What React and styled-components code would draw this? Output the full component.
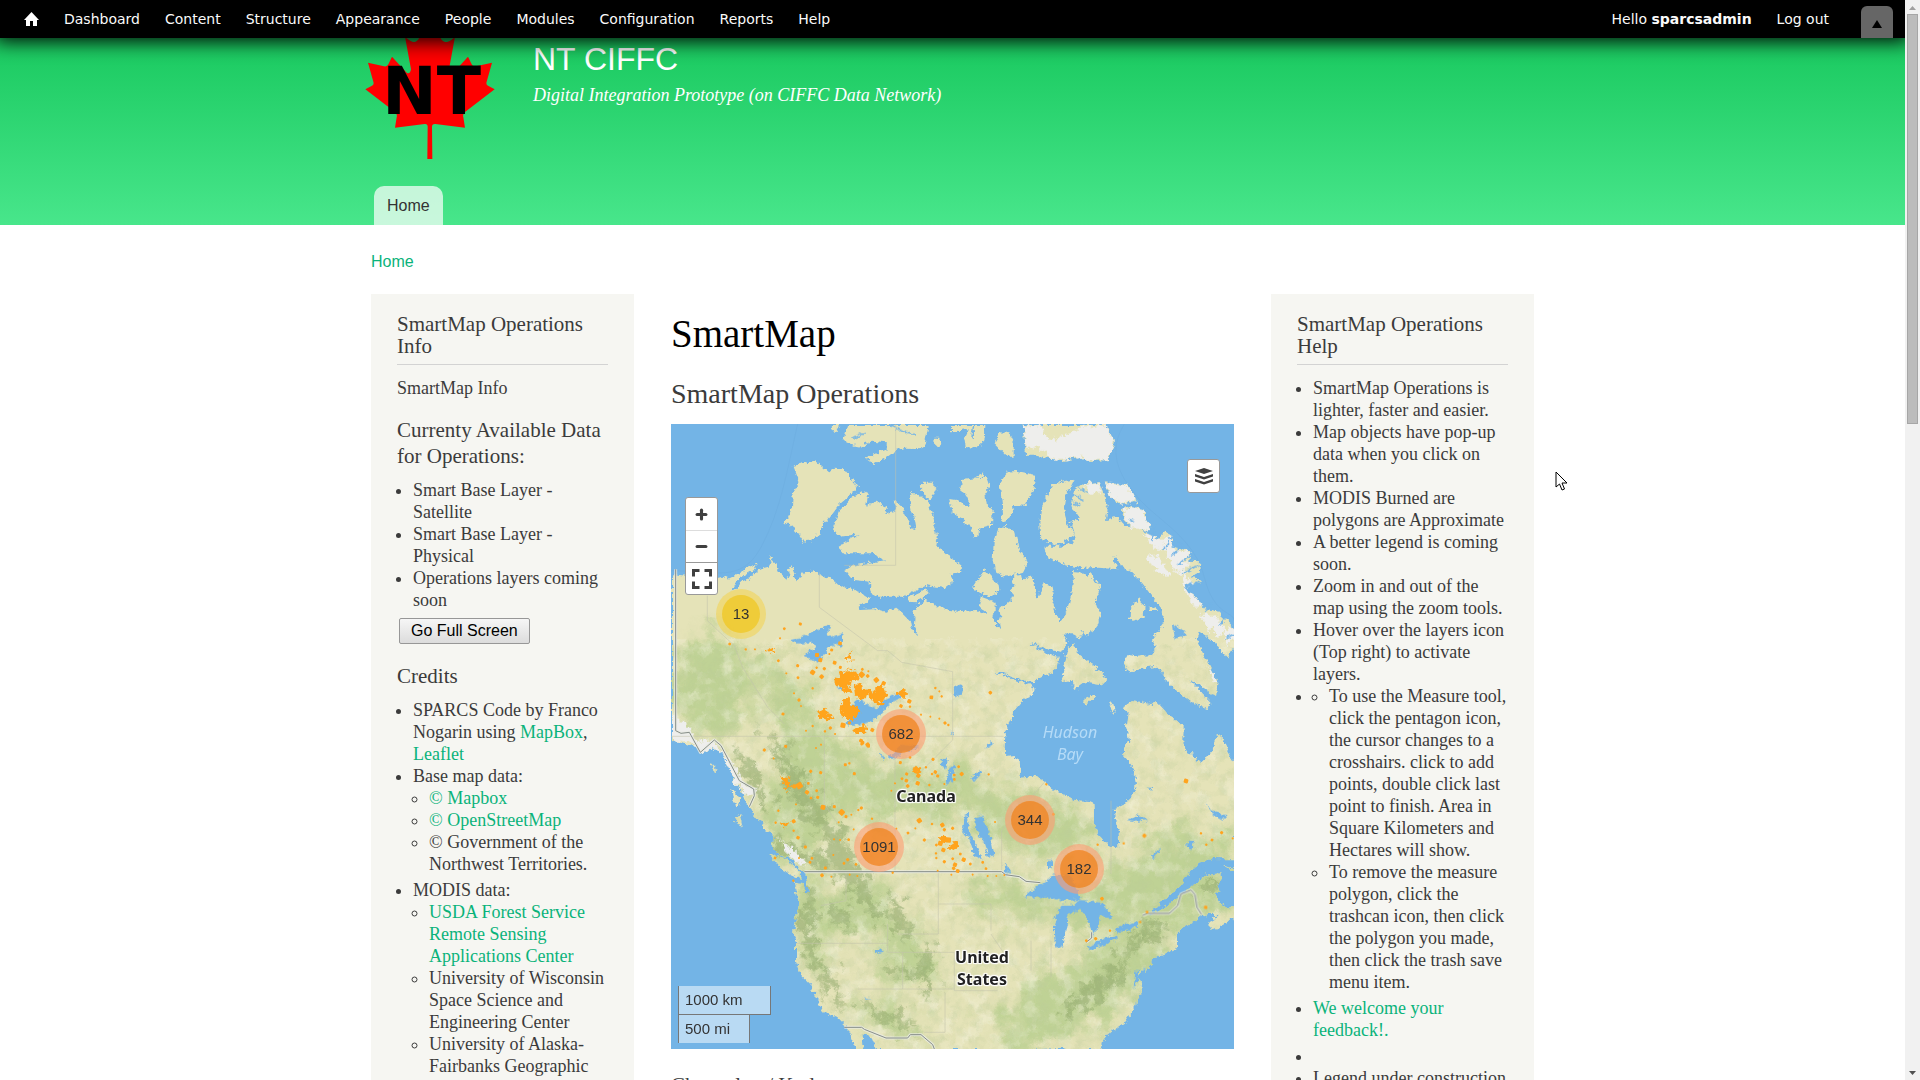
import React from "react";
import styled, { createGlobalStyle } from "styled-components";
import { FiPlus, FiMinus } from "react-icons/fi";

const COLORS = {
  text: "#3b3b3b",
  link: "#0ab37a",
  sidebar: "#f6f6f2",
  line: "#d3d3d3",
  water: "#73b4e6",
  land: "#e5e3b8",
};

const SERIF = `Georgia, "Liberation Serif", serif`;
const SANS = `"Liberation Sans", Arial, sans-serif`;

const GlobalStyle = createGlobalStyle`
  * {
    box-sizing: border-box;
  }
  body {
    margin: 0;
    overflow: hidden;
    background: #fff;
    color: ${COLORS.text};
    font-family: ${SERIF};
    font-size: 18px;
    line-height: 22px;
  }
  h1, h2, h3, p, ul {
    margin: 0;
    padding: 0;
    font-weight: normal;
  }
  a {
    color: ${COLORS.link};
    text-decoration: none;
  }
`;

const Window = styled.div`
  display: grid;
  grid-template-columns: 1fr 15px;
  height: 100vh;
  overflow: hidden;
`;

const Page = styled.div`
  min-width: 0;
  overflow: hidden;
`;

const ScrollBar = styled.div`
  display: flex;
  flex-direction: column;
  align-items: center;
  background: #f1f1f1;
  svg {
    flex: none;
    width: 15px;
    height: 14px;
  }
  .thumb {
    flex: 0 0 38%;
    width: 11px;
    background: #bcbcbc;
    border: 1px solid #a6a6a6;
  }
  .space {
    flex: 1;
  }
`;

const Toolbar = styled.nav`
  position: relative;
  z-index: 2;
  display: flex;
  align-items: center;
  height: 38px;
  padding: 0 12px 0 24px;
  background: #000;
  box-shadow: 0 -2px 20px 5px #000;
  font-family: "DejaVu Sans", Verdana, sans-serif;
  font-size: 14px;
  a {
    color: #fafafa;
  }
`;

const ToolbarMenu = styled.div`
  display: flex;
  align-items: center;
  gap: 25px;
  svg {
    display: block;
    width: 15px;
    height: 15px;
  }
`;

const UserMenu = styled(ToolbarMenu)`
  margin-left: auto;
`;

const ToggleButton = styled.button`
  align-self: flex-end;
  width: 32px;
  height: 32px;
  margin-left: 32px;
  padding: 4px 0 0;
  border: 0;
  border-radius: 6px 6px 0 0;
  background: #666;
  svg {
    display: block;
    margin: auto;
  }
`;

const Header = styled.header`
  background: linear-gradient(#19c95f, #48e68b);
`;

const HeaderInner = styled.div`
  width: 1175px;
  max-width: 100%;
  margin: 0 auto;
`;

const Branding = styled.div`
  display: flex;
  gap: 38px;
  color: #fff;
  svg {
    width: 130px;
    height: 122px;
  }
  .names {
    display: flex;
    flex-direction: column;
    gap: 9px;
    padding-top: 5px;
  }
  .site-name {
    color: #fff;
    font-family: ${SANS};
    font-size: 32px;
    line-height: 32px;
  }
  .slogan {
    font-style: italic;
  }
`;

const Tabs = styled.nav`
  display: flex;
  padding: 26px 9px 0;
  a {
    padding: 0 13px;
    border-radius: 10px 10px 0 0;
    background: rgba(255, 255, 255, 0.7);
    color: #333;
    font-family: ${SANS};
    font-size: 16px;
    line-height: 39px;
  }
`;

const Container = styled.div`
  width: 1163px;
  max-width: 100%;
  margin: 0 auto;
`;

const Breadcrumb = styled.div`
  padding: 26px 0 21px;
  font-family: ${SANS};
  font-size: 16px;
`;

const Columns = styled.div`
  display: grid;
  grid-template-columns: 263px 1fr 263px;
  gap: 37px;
`;

const Sidebar = styled.aside`
  padding: 19px 26px;
  background: ${COLORS.sidebar};
`;

const BlockTitle = styled.h2`
  margin-bottom: 12px;
  padding-bottom: 7px;
  border-bottom: 1px solid ${COLORS.line};
  font-size: 21px;
  line-height: 22px;
`;

const SubTitle = styled.h3`
  padding: 18px 0 10px;
  font-size: 21px;
  line-height: 26px;
`;

const List = styled.ul`
  ul {
    padding-bottom: 4px;
  }
  li {
    margin-left: 16px;
  }
  .spaced {
    padding-bottom: 4px;
  }
`;

const FullScreenButton = styled.button`
  display: block;
  height: 26px;
  margin: 7px 2px 1px;
  padding: 0 11px;
  border: 1px solid #979797;
  border-radius: 2px;
  background: linear-gradient(#f6f6f6, #dcdcdc);
  color: #000;
  font-family: ${SANS};
  font-size: 16px;
`;

const Main = styled.main`
  min-width: 0;
  padding-top: 18px;
  h1 {
    color: #000;
    font-size: 39px;
    line-height: 44px;
  }
  h2 {
    padding: 22px 0 14px;
    font-size: 28px;
    line-height: 32px;
  }
  h3 {
    padding-top: 23px;
    font-size: 21px;
    line-height: 26px;
  }
`;

const MapBox = styled.div`
  position: relative;
  height: 625px;
  overflow: hidden;
  background: ${COLORS.water};
  font-family: ${SANS};
  > svg {
    display: block;
    width: 100%;
    height: 100%;
  }
`;

const MapControls = styled.div`
  position: absolute;
  top: ${(props) => props.top}px;
  left: ${(props) => props.left || "auto"};
  right: ${(props) => props.right || "auto"};
  border: 1px solid #999;
  border-radius: 3px;
  background: #fff;
  button {
    display: flex;
    align-items: center;
    justify-content: center;
    width: 31px;
    height: 32px;
    padding: 0;
    border: 0;
    border-top: 1px solid #ddd;
    background: none;
    color: #404040;
  }
  button:first-child {
    border-top: 0;
  }
  button:last-child {
    border-color: ${(props) => (props.left ? "#999" : "transparent")};
  }
`;

const Cluster = styled.div`
  position: absolute;
  display: flex;
  align-items: center;
  justify-content: center;
  width: 50px;
  height: 50px;
  border-radius: 50%;
  transform: translate(-50%, -50%);
  background: ${(props) =>
    props.small ? "rgba(241, 211, 87, 0.6)" : "rgba(253, 156, 115, 0.6)"};
  color: #333;
  font-size: 15px;
  span {
    width: 38px;
    border-radius: 50%;
    background: ${(props) =>
      props.small ? "rgba(240, 194, 12, 0.6)" : "rgba(241, 128, 23, 0.7)"};
    line-height: 38px;
    text-align: center;
  }
`;

const PlaceLabel = styled.div`
  position: absolute;
  transform: translate(-50%, -50%);
  color: ${(props) => (props.sea ? "#b5dbf7" : "#222")};
  font-family: "Noto Sans", sans-serif;
  font-size: 16px;
  font-style: ${(props) => (props.sea ? "italic" : "normal")};
  font-weight: ${(props) => (props.sea ? 400 : 700)};
  text-align: center;
  text-shadow: ${(props) =>
    props.sea
      ? "none"
      : "0 0 2px #fff, 1px 1px 1px #fff, -1px -1px 1px #fff, 1px -1px 1px #fff, -1px 1px 1px #fff"};
`;

const MapScale = styled.div`
  position: absolute;
  bottom: 6px;
  left: 7px;
  color: #333;
  font-size: 15px;
  div {
    width: 93px;
    padding-left: 6px;
    border: 1px solid #777;
    border-width: 0 1px 1px;
    background: rgba(255, 255, 255, 0.5);
    line-height: 28px;
  }
  div + div {
    width: 72px;
    border-bottom: 0;
  }
`;

const Pointer = styled.svg`
  position: fixed;
  top: 471px;
  left: 1555px;
  width: 13px;
  height: 21px;
`;

const menuItems = [
  "Dashboard",
  "Content",
  "Structure",
  "Appearance",
  "People",
  "Modules",
  "Configuration",
  "Reports",
  "Help",
];

const clusters = [
  { count: 13, x: 70, y: 190 },
  { count: 682, x: 230, y: 310 },
  { count: 1091, x: 208, y: 423 },
  { count: 344, x: 359, y: 396 },
  { count: 182, x: 408, y: 445 },
];

const mainland =
  "M0 448L40 452 140 458 160 452 165 462 200 445 232 425 258 415 250 430 215 450 190 470 178 496 192 492 205 470 230 460 262 432 290 425 298 410 290 393 305 405 320 440 345 463 352 450 348 435 358 420 366 440 362 455 372 466 385 460 395 442 425 436 445 450 480 462 520 488 550 492 590 518 588 528 560 545 562 552 605 550 640 560 670 548 690 565 715 590 720 615 735 635 725 600 728 575 718 560 760 525 785 540 830 555 870 558 912 555 927 562 957 570 975 600 985 614 980 590 988 570 985 552 1020 520 1025 505 1012 495 1028 480 1020 462 1035 445 1055 460 1080 455 1088 490 1098 525 1108 490 1118 475 1135 480 1145 505 1140 530 1155 570 1165 592 1180 570 1192 530 1198 505 1203 470 1200 438 1225 440 1245 452 1260 448 1262 468 1285 475 1280 500 1272 520 1265 530 1285 560 1280 590 1262 615 1240 630 1225 610 1235 635 1222 640 1200 627 1172 625 1180 640 1190 650 1170 680 1130 675 1090 658 1075 657 1100 668 1120 685 1160 692 1155 720 1145 745 1110 752 1085 772 1060 768 1015 752 985 742 970 745 1000 752 1040 768 1075 780 1085 795 1078 810 1055 820 1030 850 1012 890 1000 930 998 970 1000 993 1010 992 1025 990 1040 1010 1050 1058 1085 1052 1115 1065 1140 1088 1175 1108 1205 1125 1250 1128 1265 1135 1266 1200 1275 1215 1285 1235 1308 1260 1320 1272 1332 1262 1342 1265 1340 1230 1330 1185 1325 1150 1355 1135 1385 1105 1392 1080 1387 1050 1378 1020 1350 990 1365 960 1372 948 1362 900 1367 860 1355 840 1377 825 1437 838 1452 828 1477 855 1492 875 1535 900 1534 950 1537 978 1552 985 1567 985 1572 1013 1597 1008 1622 973 1627 955 1640 925 1652 945 1670 985 1689 1015 1689 1303 1620 1302 1580 1310 1550 1350 1520 1385 1480 1420 1440 1460 1445 1465 1500 1430 1560 1380 1600 1350 1645 1345 1648 1365 1632 1380 1642 1400 1630 1410 1645 1435 1670 1448 1689 1440 1689 1475 1660 1480 1640 1510 1620 1510 1612 1492 1640 1475 1620 1462 1590 1475 1560 1490 1530 1505 1515 1530 1515 1565 1505 1570 1520 1568 1440 1600 1437 1620 1400 1655 1412 1690 1395 1720 1392 1745 1360 1790 1310 1825 1290 1850 1285 1875 1200 1875 1175 1868 1100 1872 1090 1875 615 1875 600 1838 572 1830 575 1875 552 1875 535 1830 520 1800 495 1775 455 1760 440 1730 415 1680 390 1655 372 1610 372 1555 366 1530 375 1450 380 1430 365 1370 395 1375 400 1405 411 1405 405 1370 400 1343 370 1320 360 1300 320 1290 300 1260 305 1230 275 1215 270 1190 248 1180 230 1140 210 1100 190 1075 170 1030 150 985 120 965 90 990 80 975 50 960 0 945Z";

const islands = [
  "M362 122L430 106 470 140 485 128 515 130 558 185 500 235 470 275 450 300 445 328 398 354 375 318 340 292 360 245 362 205 380 170Z",
  "M500 260L540 215 580 197 588 210 582 245 605 228 645 245 640 265 675 255 665 225 690 245 705 275 715 310 730 312 720 250 713 205 730 205 768 225 780 270 795 330 790 360 830 395 868 420 865 440 835 450 845 470 820 490 760 480 720 500 690 515 620 515 600 505 592 470 545 465 520 435 540 422 640 405 600 385 515 385 497 365 560 328 500 335 480 310Z",
  "M525 0L770 0 755 70 700 68 665 80 640 100 605 117 582 98 640 75 645 55 600 50 560 68 512 45Z",
  "M480 0L502 0 490 22 477 12Z",
  "M740 185L755 170 785 170 790 190 775 225 765 215Z",
  "M790 38L805 38 808 55 797 66 786 55Z",
  "M705 520L765 492 770 505 735 532 710 530Z",
  "M837 0L937 0 936 30 933 50 915 68 878 66 875 45 890 12 837 22Z",
  "M965 55L985 22 1012 25 1025 50 1025 95 1005 95 985 75Z",
  "M1055 0L1300 0 1325 40 1325 60 1310 105 1260 108 1225 98 1170 108 1095 92 1062 92Z",
  "M832 222L850 225 880 245 893 240 880 205 865 195 870 165 920 158 945 160 952 180 940 205 945 245 962 255 960 300 925 310 922 335 908 338 893 305 870 280 840 265Z",
  "M902 158L937 142 932 155Z",
  "M983 170L1005 140 1032 138 1090 150 1085 190 1058 242 1020 240 1023 260 1000 290 989 290 990 240Z",
  "M965 350L975 310 1000 302 1030 325 1040 370 1065 410 1050 440 1000 455 970 440 962 405Z",
  "M1107 250L1145 175 1205 164 1180 215 1175 250 1190 300 1207 330 1180 350 1155 362 1105 340 1102 295Z",
  "M912 472L935 433 980 480 982 495 960 516 930 505 900 490Z",
  "M927 515L968 530 968 560 960 590 940 560 920 545Z",
  "M1190 665L1205 658 1215 685 1245 705 1275 730 1303 765 1290 778 1240 770 1210 792 1195 765 1165 772Z",
  "M1375 545L1400 525 1418 540 1415 575 1390 588 1373 575Z",
  "M1235 820L1268 805 1272 815 1245 840 1233 835Z",
  "M1310 840L1320 832 1328 855 1318 866Z",
  "M1430 545L1450 545 1455 555 1430 555Z",
  "M1207 195L1237 175 1282 172 1297 215 1307 250 1302 285 1337 275 1357 300 1397 310 1437 330 1477 350 1497 395 1527 440 1537 490 1577 520 1597 550 1637 560 1689 610 1689 660 1667 700 1642 670 1627 650 1582 620 1572 640 1597 690 1617 730 1637 770 1632 815 1597 790 1552 765 1612 830 1607 853 1557 830 1517 800 1487 770 1457 725 1417 730 1397 735 1367 740 1354 715 1367 690 1397 695 1437 690 1452 670 1437 645 1477 590 1467 550 1437 510 1407 470 1377 440 1347 420 1337 395 1322 395 1337 430 1277 425 1227 430 1187 420 1127 400 1117 365 1167 365 1212 350 1195 290 1222 280 1195 240Z",
  "M1297 168L1345 178 1370 182 1395 235 1340 235 1315 215Z",
  "M1350 255L1375 243 1418 255 1420 280 1437 300 1425 318 1380 310 1355 285Z",
  "M1445 355L1480 320 1502 335 1498 365 1555 378 1552 410 1585 412 1580 440 1560 455 1592 465 1590 475 1545 480 1530 500 1490 450 1450 400Z",
  "M287 1284L340 1298 380 1335 387 1362 330 1335Z",
  "M183 1175L212 1168 205 1190 210 1215 195 1195Z",
  "M178 1090L205 1125 200 1144 185 1130Z",
  "M115 1010L135 1030 125 1040Z",
  "M1612 1498L1655 1455 1689 1465 1689 1478 1640 1505 1615 1515Z",
  "M1650 1318L1689 1330 1689 1340Z",
  "M205 1090L235 1085 248 1110 238 1145 222 1130Z",
];

const snow = [
  "M1055 0L1112 0 1120 35 1145 42 1195 25 1225 5 1300 0 1325 40 1325 60 1310 105 1260 108 1225 98 1170 108 1135 105 1110 72 1060 62Z",
  "M1297 168L1345 178 1370 182 1395 235 1340 232 1315 215Z",
  "M1350 255L1375 243 1418 255 1420 280 1437 300 1425 315 1380 310 1355 285Z",
  "M1425 390L1455 395 1485 430 1490 452 1465 448 1430 415Z",
  "M1500 375L1555 380 1535 410 1560 412 1525 450 1505 430 1490 400Z",
  "M1525 435L1560 470 1585 510 1600 540 1570 545 1540 500Z",
  "M1582 565L1625 570 1660 610 1640 635 1600 600Z",
  "M1470 345L1500 325 1500 350 1520 350 1500 395 1480 395Z",
  "M1420 325L1460 335 1480 370 1460 375 1430 350Z",
  "M1612 725L1625 740 1635 775 1622 770Z",
  "M1655 620L1689 600 1689 640 1665 660Z",
  "M1230 175L1282 172 1290 200 1255 205Z",
  "M0 870L30 890 60 920 75 950 120 945 160 990 190 1030 215 1075 250 1090 252 1110 215 1105 180 1060 150 1020 90 1000 55 950 0 945Z",
  "M320 1240L360 1270 400 1310 395 1325 350 1290Z",
];

const lakes = [
  "M353 645L400 632 430 615 470 598 483 606 460 625 480 635 512 623 508 665 480 660 465 680 440 710 425 705 392 695 408 678 432 672 425 650 395 655 360 655Z",
  "M520 890L545 870 540 840 560 822 590 840 615 850 640 820 672 805 690 812 660 830 620 870 600 890 560 900 530 898Z",
  "M495 780L520 795 510 798Z",
  "M845 795L860 778 872 785 868 805 850 815Z",
  "M835 915L845 925 842 932Z",
  "M808 1005L825 1000 820 1030 810 1025Z",
  "M850 1015L840 1068 822 1080 832 1030Z",
  "M900 1055L925 1035 930 1045 908 1068Z",
  "M940 970L955 948 960 960Z",
  "M875 1175L888 1165 890 1210 900 1240 925 1290 932 1305 905 1290 885 1230 870 1210Z",
  "M905 1180L930 1170 945 1205 957 1235 967 1290 950 1295 935 1250 912 1210Z",
  "M995 1345L1000 1315 1015 1340 1000 1350Z",
  "M1125 1305L1140 1305 1140 1325 1125 1328Z",
  "M1058 1415L1100 1380 1150 1348 1190 1350 1215 1390 1225 1425 1170 1428 1145 1420 1115 1415 1090 1418Z",
  "M1145 1500L1165 1440 1205 1440 1215 1428 1290 1432 1315 1462 1320 1480 1280 1475 1275 1515 1262 1528 1250 1500 1240 1470 1225 1455 1190 1465 1180 1520 1175 1560 1155 1568 1147 1545Z",
  "M1248 1565L1290 1540 1330 1532 1335 1542 1270 1570 1250 1572Z",
  "M1325 1510L1350 1500 1395 1490 1395 1502 1370 1515 1335 1522Z",
  "M1440 1460L1500 1410 1530 1380 1560 1330 1580 1315 1600 1340 1540 1400 1500 1430 1435 1468Z",
  "M1367 1185L1390 1175 1395 1165 1425 1185 1395 1190Z",
  "M1440 1290L1465 1265 1455 1285 1442 1305Z",
  "M1545 1250L1565 1252 1562 1275 1550 1275Z",
  "M1600 1130L1615 1155 1640 1165 1665 1170 1650 1185 1615 1165Z",
  "M1425 1085L1440 1085 1440 1100Z",
  "M610 1575L628 1572 632 1590 622 1592Z",
  "M622 990L635 990 635 1005Z",
  "M650 995L690 955 740 965 700 980 665 1000Z",
  "M1500 598L1530 610 1545 630 1505 642Z",
  "M1390 1640L1402 1630 1398 1670 1385 1690Z",
  "M1408 1635L1418 1632 1412 1660Z",
  "M575 1717L595 1722 580 1724Z",
];

const forests = [
  [120, 780, 130, 160, 0],
  [370, 880, 70, 200, -25],
  [480, 1060, 190, 100, 15],
  [760, 1100, 180, 80, 0],
  [1080, 1200, 190, 90, 20],
  [1480, 1330, 230, 100, -20],
  [1330, 1420, 190, 80, -10],
  [1560, 1430, 140, 90, -30],
  [380, 1180, 110, 130, -30],
  [420, 1470, 50, 150, 0],
  [560, 1470, 110, 90, 20],
  [1010, 1420, 130, 60, 10],
  [1130, 1760, 170, 110, -20],
  [1330, 1640, 180, 110, -40],
  [700, 1600, 70, 110, 0],
  [660, 1790, 120, 40, 20],
];

const highlands = [
  [450, 1190, 26, 230, -35],
  [550, 1380, 26, 140, -35],
  [410, 1500, 18, 120, 0],
  [465, 1660, 18, 110, -28],
  [390, 1290, 100, 20, 25],
  [240, 1060, 20, 100, -30],
  [350, 1020, 16, 130, -30],
  [500, 1470, 40, 30, 20],
  [680, 1480, 20, 80, -20],
  [765, 1640, 18, 90, 0],
  [1270, 1690, 26, 130, 50],
  [1410, 1540, 20, 90, 50],
  [700, 1640, 60, 16, 5],
  [660, 1780, 80, 14, 25],
  [1620, 1380, 50, 14, -20],
];

const borders = [
  "M14 436V920L30 928 55 925 88 985 130 948 150 965 205 1070 248 1095 250 1115 235 1148",
  "M400 1343H992L1003 1352 1045 1358 1065 1372 1108 1376",
  "M1415 1474L1430 1468H1495L1520 1445 1530 1410 1560 1398 1572 1412 1578 1450 1592 1472",
  "M520 1810H572L580 1816 645 1842H710L718 1832H750L785 1862 790 1875",
  "M1245 1555L1262 1542 1262 1525",
];

const fireBlobs = [
  "M493 775L510 750 530 738 550 742 560 760 545 770 530 780 540 800 525 805 505 790Z",
  "M550 782L570 780 575 798 595 795 598 808 570 825 555 815Z",
  "M595 815L615 798 630 785 650 812 635 835 610 835Z",
  "M508 850L530 818 538 845 560 850 565 865 545 888 515 878Z",
  "M443 865L460 855 470 870 485 878 475 888 450 878Z",
  "M680 810L700 798 708 815 695 825Z",
  "M550 920L580 900 588 920 570 928Z",
  "M522 705L540 688 542 708Z",
  "M333 1065L345 1060 362 1085 350 1095Z",
  "M328 1195L355 1195 342 1210Z",
  "M838 1265L858 1255 858 1275 830 1275Z",
  "M805 1240L820 1238 828 1255 812 1252Z",
  "M732 1035L746 1035 742 1050Z",
  "M292 672L310 678 305 686Z",
];

// x, y, size
const fireDots = [
  [176, 660, 8], [224, 676, 7], [252, 676, 6], [322, 710, 8], [340, 614, 8],
  [388, 600, 9], [327, 643, 6], [380, 725, 9], [346, 748, 6], [381, 761, 8],
  [425, 745, 14], [438, 693, 12], [448, 708, 12], [482, 678, 9], [507, 658, 11],
  [491, 716, 11], [460, 734, 9], [452, 758, 12], [437, 731, 7], [475, 690, 6],
  [508, 730, 9], [574, 736, 8], [592, 742, 6], [572, 752, 16], [590, 756, 10],
  [616, 768, 14], [638, 778, 12], [560, 764, 10], [425, 793, 7], [369, 808, 6],
  [384, 828, 9], [390, 846, 6], [336, 870, 9], [715, 832, 12], [690, 846, 10],
  [717, 848, 7], [793, 792, 7], [781, 820, 11], [812, 817, 7], [805, 802, 6],
  [516, 904, 15], [535, 897, 9], [478, 912, 9], [462, 922, 7], [492, 930, 6],
  [425, 906, 7], [405, 920, 6], [604, 918, 11], [570, 950, 11], [590, 962, 12],
  [572, 960, 8], [778, 878, 6], [822, 897, 9], [832, 903, 7], [750, 872, 6],
  [805, 884, 6], [450, 962, 6], [435, 972, 6], [344, 967, 9], [280, 978, 9],
  [308, 1003, 6], [419, 1042, 9], [449, 1046, 9], [523, 1022, 9], [535, 1018, 7],
  [550, 1049, 9], [412, 1078, 8], [385, 1085, 18], [370, 1087, 12], [408, 1105, 12],
  [437, 1100, 8], [440, 1120, 9], [420, 1122, 8], [375, 1141, 6], [456, 1150, 14],
  [490, 1148, 9], [512, 1165, 16], [525, 1178, 9], [503, 1195, 6], [541, 1172, 6],
  [571, 1152, 9], [562, 1158, 7], [603, 1184, 7], [548, 1216, 6], [322, 1160, 7],
  [314, 1196, 7], [368, 1192, 11], [368, 1220, 7], [381, 1241, 10], [403, 1269, 9],
  [384, 1302, 6], [423, 1303, 8], [417, 1315, 8], [312, 1302, 8], [489, 1246, 6],
  [507, 1248, 6], [533, 1247, 8], [487, 1293, 6], [530, 1307, 9], [519, 1318, 8],
  [555, 1321, 8], [463, 1332, 9], [453, 1354, 10], [481, 1358, 6], [536, 1352, 6],
  [559, 1356, 6], [665, 1346, 7], [367, 1370, 7], [676, 1214, 6], [711, 1227, 8],
  [733, 1213, 6], [745, 1190, 14], [760, 1248, 9], [783, 1200, 7], [814, 1203, 12],
  [820, 1217, 9], [845, 1213, 9], [808, 1258, 14], [832, 1248, 16], [848, 1268, 16],
  [796, 1263, 8], [817, 1278, 12], [795, 1288, 7], [796, 1302, 7], [820, 1313, 9],
  [845, 1304, 8], [852, 1322, 12], [848, 1333, 10], [800, 1340, 6], [860, 1341, 11],
  [841, 1352, 6], [868, 1290, 8], [878, 1307, 12], [898, 1320, 8], [905, 1352, 6],
  [945, 1334, 8], [935, 1315, 8], [976, 1356, 6], [950, 1356, 6], [1000, 1353, 6],
  [688, 1016, 9], [717, 1000, 8], [735, 1036, 16], [707, 1050, 9], [693, 1064, 8],
  [706, 1070, 10], [742, 1055, 12], [740, 1078, 12], [710, 1086, 10], [672, 1078, 6],
  [661, 1100, 6], [786, 1006, 9], [793, 1044, 10], [800, 1056, 9], [783, 1050, 7],
  [775, 1083, 7], [765, 1030, 7], [820, 1080, 6], [850, 1053, 8], [872, 1050, 11],
  [863, 1028, 8], [850, 1066, 8], [953, 1051, 7], [816, 1130, 7], [790, 1122, 8],
  [958, 806, 10], [1126, 1081, 7], [972, 1194, 6], [1147, 1171, 8], [1280, 1262, 7],
  [1358, 1258, 7], [1420, 1235, 11], [1545, 1071, 13], [1590, 1228, 7], [1606, 1262, 7],
  [1623, 1248, 8], [1652, 1226, 9], [1685, 1243, 6], [1604, 1450, 10], [1428, 1464, 8],
  [1407, 1494, 7], [1293, 1424, 10], [1317, 1520, 7], [1274, 1544, 9], [1246, 1550, 8],
  [575, 956, 10], [592, 966, 10],
];

function MapDrawing() {
  return (
    <svg viewBox="0 0 1689 1875" preserveAspectRatio="xMidYMid slice">
      <defs>
        <clipPath id="land">
          <path d={mainland} />
          {islands.map((d) => (
            <path key={d} d={d} />
          ))}
        </clipPath>
        <filter id="coast" x="0" y="0" width="100%" height="100%">
          <feTurbulence baseFrequency="0.045" numOctaves="3" seed="4" />
          <feDisplacementMap
            in="SourceGraphic"
            scale="17"
            xChannelSelector="R"
            yChannelSelector="G"
          />
        </filter>
        <filter id="soft" x="-10%" y="-10%" width="120%" height="120%">
          <feGaussianBlur stdDeviation="24" result="b" />
          <feTurbulence
            type="fractalNoise"
            baseFrequency="0.012"
            numOctaves="5"
            seed="5"
          />
          <feDisplacementMap
            in="b"
            scale="190"
            xChannelSelector="R"
            yChannelSelector="G"
          />
        </filter>
        <filter id="ridge" x="-5%" y="-5%" width="110%" height="110%">
          <feGaussianBlur stdDeviation="8" result="b" />
          <feTurbulence
            type="fractalNoise"
            baseFrequency="0.03"
            numOctaves="5"
            seed="8"
          />
          <feDisplacementMap
            in="b"
            scale="110"
            xChannelSelector="R"
            yChannelSelector="G"
          />
        </filter>
        <filter id="patchy" x="-5%" y="-5%" width="110%" height="110%">
          <feTurbulence
            type="fractalNoise"
            baseFrequency="0.08"
            numOctaves="3"
            seed="3"
          />
          <feDisplacementMap
            in="SourceGraphic"
            scale="26"
            xChannelSelector="R"
            yChannelSelector="G"
          />
        </filter>
        <filter id="relief" x="0" y="0" width="100%" height="100%">
          <feTurbulence
            type="fractalNoise"
            baseFrequency="0.03"
            numOctaves="6"
            seed="2"
          />
          <feColorMatrix values="0 0 0 0 .5  0 0 0 0 .6  0 0 0 0 .32  2.4 0 0 0 -1.05" />
        </filter>
        <filter id="light" x="0" y="0" width="100%" height="100%">
          <feTurbulence
            type="fractalNoise"
            baseFrequency="0.02"
            numOctaves="6"
            seed="12"
          />
          <feColorMatrix values="0 0 0 0 .93  0 0 0 0 .91  0 0 0 0 .77  0 3 0 0 -1.4" />
        </filter>
      </defs>
      <rect width="1689" height="1875" fill={COLORS.water} />
      <g fill="none" stroke="#69a8da" strokeWidth="2" opacity="0.5">
        <path d="M380 0C350 130 330 260 270 370S130 440 0 440" />
        <path d="M1360 0C1310 80 1340 150 1400 220S1570 340 1600 460 1689 560 1689 590" />
      </g>
      <g filter="url(#coast)">
        <g clipPath="url(#land)">
          <rect width="1689" height="1875" fill={COLORS.land} />
          <g fill="#b6ce8c" opacity="0.8" filter="url(#soft)">
            {forests.map(([x, y, rx, ry, turn]) => (
              <ellipse
                key={`${x}-${y}`}
                cx={x}
                cy={y}
                rx={rx}
                ry={ry}
                transform={`rotate(${turn} ${x} ${y})`}
              />
            ))}
          </g>
          <rect
            y="640"
            width="1689"
            height="1235"
            filter="url(#light)"
            opacity="0.45"
          />
          <g fill="#8fa76a" opacity="0.6" filter="url(#ridge)">
            {highlands.map(([x, y, rx, ry, turn]) => (
              <ellipse
                key={`${x}-${y}`}
                cx={x}
                cy={y}
                rx={rx}
                ry={ry}
                transform={`rotate(${turn} ${x} ${y})`}
              />
            ))}
          </g>
          <rect
            y="660"
            width="1689"
            height="1215"
            filter="url(#relief)"
            opacity="0.4"
          />
          <g fill="#eeeeec" filter="url(#patchy)">
            {snow.map((d) => (
              <path key={d} d={d} />
            ))}
          </g>
        </g>
        <g fill={COLORS.water}>
          {lakes.map((d) => (
            <path key={d} d={d} />
          ))}
        </g>
        {/* fjords on the east side of Baffin Island */}
        <g stroke={COLORS.water} strokeWidth="5" fill="none">
          <path d="M1440 345L1452 300M1475 375L1500 335M1500 390L1530 355M1515 420L1560 385M1530 445L1580 420M1550 480L1590 470M1390 290L1370 280M1600 560L1620 530M1640 600L1670 570M1660 640L1689 625M1205 210L1235 225M1200 235L1225 240M1225 190L1250 205M905 0L900 40M650 0L700 20 730 30M540 40L580 25" />
        </g>
      </g>
      <g fill="none" stroke="#c3c3ac" strokeWidth="2" opacity="0.8">
        <path d="M674 0V424H520M445 445V550L620 680H650L692 715 845 743V948M0 937H998M460 937V1140L500 1200M672 1000V1340M845 948L672 1120M992 1340V1220L1120 1075M109 515V590L190 665 215 730 290 850 340 900" />
        <path d="M802 1345V1530H680M802 1440H960V1520M450 1445L525 1430V1345M375 1558H650V1585H850M650 1558V1500M695 1585V1695H560M695 1695H850M822 1705V1825H760M850 1585V1700H980M960 1530L1000 1590M1080 1550V1640M1140 1550V1660M1320 1130V1350" />
      </g>
      <g fill="none" strokeLinejoin="round">
        {borders.map((d) => (
          <g key={d}>
            <path d={d} stroke="#e9ebe4" strokeWidth="9" opacity="0.8" />
            <path d={d} stroke="#868d88" strokeWidth="3" />
          </g>
        ))}
      </g>
      <g fill="#ffa41f">
        <g filter="url(#patchy)">
          {fireBlobs.map((d) => (
            <path
              key={d}
              d={d}
              stroke="#ffa41f"
              strokeWidth="5"
              strokeLinejoin="round"
            />
          ))}
        </g>
        {fireDots.map(([x, y, size]) => (
          <rect
            key={`${x}-${y}`}
            x={x - size / 2}
            y={y - size / 2}
            width={size}
            height={size}
            rx="3"
            transform={`rotate(${(x * 7) % 60} ${x} ${y})`}
          />
        ))}
      </g>
    </svg>
  );
}

function Logo() {
  return (
    <svg viewBox="75 54 390 366" role="img" aria-label="NT">
      <path
        fill="#f00"
        d="M270 -10L240 50Q232 66 222 66T195 50L213 148Q210 164 200 158L156 110 145 133Q142 141 132 139L84 128 100 185Q103 193 96 197L76 208 165 276Q173 283 170 292L165 323 254 312Q263 311 263 320L262 417H277L276 320Q276 311 286 312L375 323 370 292Q367 283 375 276L464 208 444 197Q437 193 440 185L456 128 408 139Q398 141 395 133L384 110 340 158Q330 164 327 148L345 50Q330 66 318 66T300 50Z"
      />
      <text
        x="127"
        y="282"
        fontFamily="DejaVu Sans, sans-serif"
        fontWeight="700"
        fontSize="195"
      >
        NT
      </text>
    </svg>
  );
}

export default function App() {
  return (
    <>
      <GlobalStyle />
      <Window>
        <Page>
          <Toolbar>
            <ToolbarMenu>
              <a href="#home" aria-label="Home">
                <svg viewBox="0 0 15 15" fill="#fff">
                  <path d="M7.500 0L15 8H13V14H9V9H6V14H2V8H0Z" />
                </svg>
              </a>
              {menuItems.map((item) => (
                <a key={item} href="#menu">
                  {item}
                </a>
              ))}
            </ToolbarMenu>
            <UserMenu>
              <a href="#user">
                Hello <strong>sparcsadmin</strong>
              </a>
              <a href="#logout">Log out</a>
            </UserMenu>
            <ToggleButton aria-label="Hide shortcuts">
              <svg width="10" height="8" viewBox="0 0 10 8">
                <path d="M5 0L10 8H0Z" />
              </svg>
            </ToggleButton>
          </Toolbar>

          <Header>
            <HeaderInner>
              <Branding>
                <Logo />
                <div className="names">
                  <a className="site-name" href="#home">
                    NT CIFFC
                  </a>
                  <p className="slogan">
                    Digital Integration Prototype (on CIFFC Data Network)
                  </p>
                </div>
              </Branding>
              <Tabs>
                <a href="#home">Home</a>
              </Tabs>
            </HeaderInner>
          </Header>

          <Container>
            <Breadcrumb>
              <a href="#home">Home</a>
            </Breadcrumb>
            <Columns>
              <Sidebar>
                <BlockTitle>SmartMap Operations Info</BlockTitle>
                <p>SmartMap Info</p>
                <SubTitle>Currenty Available Data for Operations:</SubTitle>
                <List>
                  <li>Smart Base Layer - Satellite</li>
                  <li>Smart Base Layer - Physical</li>
                  <li>Operations layers coming soon</li>
                </List>
                <FullScreenButton>Go Full Screen</FullScreenButton>
                <SubTitle>Credits</SubTitle>
                <List>
                  <li>
                    SPARCS Code by Franco Nogarin using{" "}
                    <a href="#mapbox">MapBox</a>, <a href="#leaflet">Leaflet</a>
                  </li>
                  <li>
                    Base map data:
                    <ul>
                      <li>
                        <a href="#mapbox">© Mapbox</a>
                      </li>
                      <li>
                        <a href="#osm">© OpenStreetMap</a>
                      </li>
                      <li>© Government of the Northwest Territories.</li>
                    </ul>
                  </li>
                  <li>
                    MODIS data:
                    <ul>
                      <li>
                        <a href="#usda">
                          USDA Forest Service Remote Sensing Applications Center
                        </a>
                      </li>
                      <li>
                        University of Wisconsin Space Science and Engineering
                        Center
                      </li>
                      <li>University of Alaska-Fairbanks Geographic</li>
                    </ul>
                  </li>
                </List>
              </Sidebar>

              <Main>
                <h1>SmartMap</h1>
                <h2>SmartMap Operations</h2>
                <MapBox>
                  <MapDrawing />
                  <PlaceLabel sea style={{ left: 399, top: 319 }}>
                    Hudson
                    <br />
                    Bay
                  </PlaceLabel>
                  <PlaceLabel style={{ left: 255, top: 372 }}>Canada</PlaceLabel>
                  <PlaceLabel style={{ left: 311, top: 544 }}>
                    United
                    <br />
                    States
                  </PlaceLabel>
                  {clusters.map(({ count, x, y }) => (
                    <Cluster
                      key={count}
                      small={count < 100}
                      style={{ left: x, top: y }}
                    >
                      <span>{count}</span>
                    </Cluster>
                  ))}
                  <MapControls top={73} left="14px">
                    <button aria-label="Zoom in">
                      <FiPlus size={15} strokeWidth={5} />
                    </button>
                    <button aria-label="Zoom out">
                      <FiMinus size={15} strokeWidth={5} />
                    </button>
                    <button aria-label="Full screen">
                      <svg
                        width="20"
                        height="20"
                        viewBox="0 0 20 20"
                        fill="none"
                        stroke="#404040"
                        strokeWidth="3"
                      >
                        <path d="M1.500 7.500V1.500H7.500M12.500 1.500H18.500V7.500M18.500 12.500V18.500H12.500M7.500 18.500H1.500V12.500" />
                      </svg>
                    </button>
                  </MapControls>
                  <MapControls top={35} right="14px">
                    <button aria-label="Layers">
                      <svg width="20" height="18" viewBox="0 0 20 18">
                        <path
                          fill="#404040"
                          d="M10 1L19 4 10 7 1 4ZM1 7L10 10 19 7V9.500L10 12.500 1 9.500ZM1 12L10 15 19 12V14.500L10 17.500 1 14.500Z"
                        />
                      </svg>
                    </button>
                  </MapControls>
                  <MapScale>
                    <div>1000 km</div>
                    <div>500 mi</div>
                  </MapScale>
                </MapBox>
                <h3>Changelog / Kudos</h3>
              </Main>

              <Sidebar>
                <BlockTitle>SmartMap Operations Help</BlockTitle>
                <List>
                  <li>SmartMap Operations is lighter, faster and easier.</li>
                  <li>Map objects have pop-up data when you click on them.</li>
                  <li>MODIS Burned are polygons are Approximate</li>
                  <li>A better legend is coming soon.</li>
                  <li>Zoom in and out of the map using the zoom tools.</li>
                  <li>
                    Hover over the layers icon (Top right) to activate layers.
                  </li>
                  <li>
                    <ul>
                      <li>
                        To use the Measure tool, click the pentagon icon, the
                        cursor changes to a crosshairs. click to add points,
                        double click last point to finish. Area in Square
                        Kilometers and Hectares will show.
                      </li>
                      <li>
                        To remove the measure polygon, click the trashcan icon,
                        then click the polygon you made, then click the trash
                        save menu item.
                      </li>
                    </ul>
                  </li>
                  <li className="spaced">
                    <a href="#feedback">We welcome your feedback!.</a>
                  </li>
                  <li />
                  <li>Legend under construction</li>
                </List>
              </Sidebar>
            </Columns>
          </Container>
        </Page>
        <ScrollBar>
          <svg viewBox="0 0 15 14">
            <path d="M7.500 6L11 10H4Z" fill="#a0a0a0" />
          </svg>
          <div className="thumb" />
          <div className="space" />
          <svg viewBox="0 0 15 14">
            <path d="M4 5H11L7.500 9Z" fill="#505050" />
          </svg>
        </ScrollBar>
      </Window>
      <Pointer viewBox="0 0 13 21">
        <path
          d="M1 1V16L4.500 13 7 19 9.500 18 7 12H12Z"
          fill="#fff"
          stroke="#000"
        />
      </Pointer>
    </>
  );
}
